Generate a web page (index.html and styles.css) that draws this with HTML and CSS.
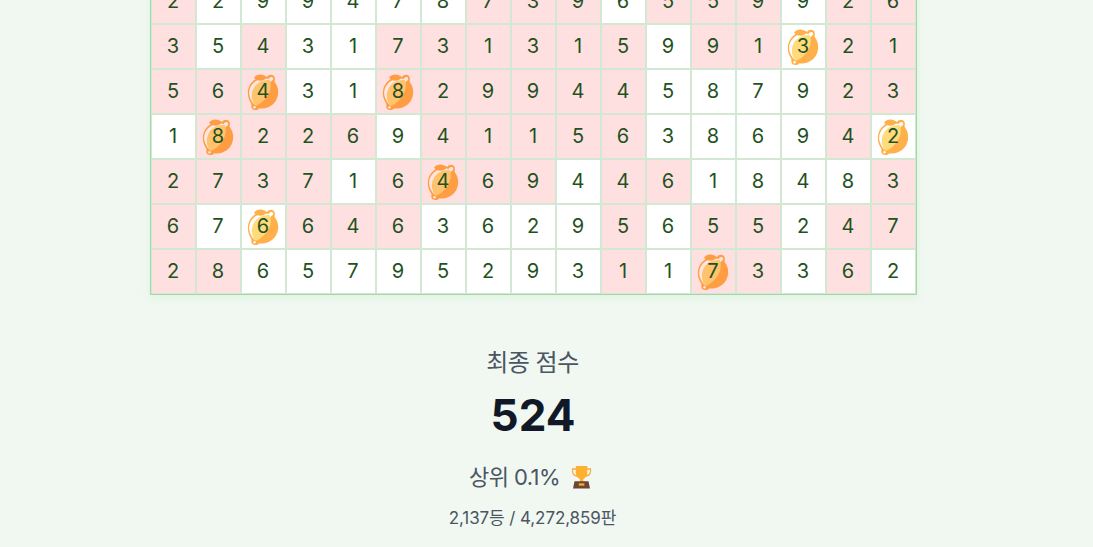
FILE: index.html
```html
<!DOCTYPE html>
<html lang="ko">

<head>
    <meta charset="UTF-8">
    <meta name="viewport" content="width=device-width, initial-scale=1.0">
    <title>최종 점수</title>
    <link rel="stylesheet" href="styles.css">
</head>

<body>
    <svg class="defs">
        <symbol id="lemon" viewBox="0 0 45 45">
            <path class="peel" d="M14 10.5 C18 7.500 22 7 26 8 C28 5 33 5 33.800 9 C34.200 11 33 12 34 13.500 C38.500 19 38 28 34 33 C30 38 24 40 18 39.500 C16 42 10.500 41.500 10.300 38 C10.300 36.500 11 35.500 9.500 33.500 C5 26 6 16 14 10.500 Z" />
            <path class="rind" d="M14.500 12.300 C19 9.500 23 9.200 27.500 10 C29 7.300 32 7.300 32.200 9.700 C32.300 12 30 11.500 29 14 L16 36 C14 36.500 12.800 35.200 11.800 34 C8.500 29 7.600 25 8.300 21.500 C9 18 11 14.800 14.500 12.300 Z" />
            <path class="pulp" d="M28.800 11 C22 10.500 16 13.500 13 18.500 C10.500 23 10 28 12 33 C12.500 34.500 13 36 15 37 C25 32 32.500 22 28.800 11 Z" />
            <circle class="rind" cx="13.500" cy="38.300" r="1.200" />
            <path class="peel" d="M13 8.800 C16 4.500 22 4.500 26 8.300 C23 12.500 17 13 13 8.800 Z" />
        </symbol>
    </svg>

    <div class="result">
        <div class="board" id="board"></div>

        <p class="label">최종 점수</p>
        <p class="score">524</p>
        <p class="rank">
            <span>상위 0.1%</span>
            <svg class="trophy" viewBox="0 0 24 24">
                <path d="M6.500 4H2.600C2 8.500 3.800 11.200 8 11M16.500 4h4C21 8.500 19.200 11.200 15 11" fill="none" stroke="#ffa938" stroke-width="1.3" />
                <path d="M5.800 1h11.500v7c0 3.200-1.800 4.700-4 6v3H9.800v-3C7.500 12.700 5.800 11.200 5.800 8z" fill="#ffb02e" />
                <path d="M4.500 16.200h14l1.500 7.200H3z" fill="#6d4534" />
                <path d="M8.800 18.300h5.600v2.400H8.800z" fill="#ffa726" />
            </svg>
        </p>
        <p class="count">2,137등 / 4,272,859판</p>
    </div>

    <script src="board.js"></script>
</body>

</html>
```
FILE: styles.css
```css
* {
    margin: 0;
    padding: 0;
    box-sizing: border-box;
}

body {
    height: 547px;
    overflow: hidden;
    background-color: #f0f8f1;
    font-family: Inter, "Noto Sans CJK KR", sans-serif;
}

.defs {
    display: block;
    width: 0;
    height: 0;
}

.result {
    display: flex;
    flex-direction: column;
    align-items: center;
    width: 1067px;
    margin-top: -22px;
}

.board {
    display: grid;
    grid-template-columns: repeat(17, 45px);
    grid-auto-rows: 45px;
    border: 1px solid #a5d6a7;
    box-shadow: 0 2px 8px rgba(129, 215, 132, 0.16);
}

.cell {
    --peel: #ffb04a;
    --pulp: #ffdb7c;
    --rind: #fff;
    position: relative;
    display: flex;
    align-items: center;
    justify-content: center;
    padding: 0 1px 1px 0;
    border: 1px solid #d3e8d3;
    background-color: #fff;
    color: #1f5222;
    font-size: 20px;
}

.cleared {
    --peel: #ff9d42;
    --pulp: #ffc36e;
    --rind: #ffe6e3;
    background-color: #ffe0e0;
}

.num {
    position: relative;
}

.lemon {
    position: absolute;
    left: -1px;
    top: -1px;
    width: 45px;
    height: 45px;
}

.peel {
    fill: var(--peel);
}

.rind {
    fill: var(--rind);
}

.pulp {
    fill: var(--pulp);
}

.label {
    margin-top: 50px;
    padding-right: 2px;
    line-height: 36px;
    font-size: 24px;
    letter-spacing: -0.5px;
    color: #4b5563;
}

.score {
    margin-top: 5px;
    padding-right: 1px;
    line-height: 58px;
    font-size: 44px;
    font-weight: 700;
    color: #111827;
}

.rank {
    display: flex;
    align-items: center;
    gap: 10px;
    margin-top: 17px;
    padding-right: 4px;
    line-height: 32px;
    font-size: 22px;
    letter-spacing: -0.6px;
    color: #4b5563;
}

.trophy {
    width: 24px;
    height: 24px;
}

.count {
    margin-top: 12px;
    padding-right: 2px;
    line-height: 26px;
    font-size: 17px;
    letter-spacing: -0.1px;
    color: #4b5563;
}
```
FILE: board.js
```js
// * : 지워진 칸, L : 레몬
var rows = [
    '2* 2 9 9 4 7 8 7* 3* 9* 6 5* 5* 9* 9 2* 6*',
    '3* 5 4* 3 1 7* 3* 1* 3* 1* 5* 9 9* 1* 3L 2* 1*',
    '5* 6* 4*L 3 1 8*L 2* 9* 9* 4* 4* 5 8 7 9 2* 3*',
    '1 8*L 2* 2* 6* 9 4* 1* 1* 5* 6* 3 8 6 9 4* 2L',
    '2* 7* 3* 7* 1 6* 4*L 6* 9* 4 4* 6* 1 8 4 8 3*',
    '6* 7 6L 6* 4* 6* 3 6 2 9 5* 6 5* 5* 2 4* 7*',
    '2* 8* 6 5 7 9 5 2 9 3 1* 1 7*L 3* 3 6* 2'
];

var html = '';
for (var i = 0; i < rows.length; ++i) {
    var cells = rows[i].split(' ');
    for (var j = 0; j < cells.length; ++j) {
        var c = cells[j];
        html += '<div class="cell' + (c.indexOf('*') > 0 ? ' cleared' : '') + '">';
        if (c.indexOf('L') > 0) {
            html += '<svg class="lemon"><use href="#lemon"/></svg>';
        }
        html += '<span class="num">' + c[0] + '</span></div>';
    }
}
document.getElementById('board').innerHTML = html;
```
